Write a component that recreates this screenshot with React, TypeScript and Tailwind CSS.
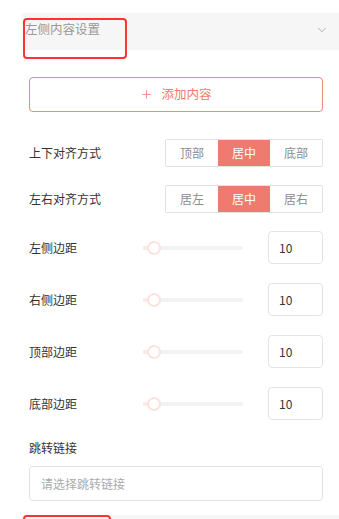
import { ChevronDown, Plus } from 'lucide-react'

const font = { fontFamily: '"Noto Sans CJK SC", "Noto Sans", sans-serif' }

function Segmented({ items, active }: { items: string[]; active: number }) {
  return (
    <div className="flex h-[28px] w-[158px] border border-[#e3e3e3] rounded-[2px] overflow-hidden">
      {items.map((t, i) => (
        <div
          key={t}
          className={
            'flex-1 flex items-center justify-center text-[12px] ' +
            (i === active ? 'bg-[#ee7a70] text-white' : 'bg-white text-[#8c8c8c]') +
            (i > 0 && i !== active && i - 1 !== active ? ' border-l border-[#e3e3e3]' : '')
          }
        >
          {t}
        </div>
      ))}
    </div>
  )
}

function SliderRow({ label }: { label: string }) {
  return (
    <div className="flex items-center h-[33px]">
      <span className="w-[114px] text-[12px] text-[#333]">{label}</span>
      <div className="relative w-[100px] h-[4px] rounded-full bg-[#f3f3f3]">
        <div className="absolute left-0 top-0 h-[4px] w-[10px] rounded-l-full bg-[#fdeae7]" />
        <div className="absolute left-[4px] top-[-5px] w-[14px] h-[14px] rounded-full bg-white border-2 border-[#fde3df]" />
      </div>
      <div className="ml-auto w-[55px] h-[33px] border border-[#e3e3e3] rounded-[4px] flex items-center pl-[10px] text-[12px] text-[#333]">
        10
      </div>
    </div>
  )
}

export default function App() {
  return (
    <div className="w-[339px] h-[519px] bg-white overflow-hidden" style={font}>
      {/* 标题栏 */}
      <div className="relative mt-[13px] ml-[22px] h-[37px] bg-[#f6f6f6] flex items-center justify-between pl-[3px] pr-[10px]">
        <span className="text-[12.5px] text-[#999] -mt-[4px]">左侧内容设置</span>
        <ChevronDown className="h-[14px] w-[14px] text-[#999] -mt-[3px]" strokeWidth={1.3} />
        <div className="absolute left-[1px] top-[5px] w-[104px] h-[41px] border-2 border-[#f33] rounded-[4px]" />
      </div>

      <div className="pl-[29px] pr-[16px]">
        <button className="mt-[27px] w-full h-[35px] border border-[#ee8a82] rounded-[4px] flex items-center justify-center gap-[8px] text-[12.5px] text-[#ee7a70]">
          <Plus className="h-[13px] w-[13px]" strokeWidth={1.5} />
          添加内容
        </button>

        <div className="mt-[27px] flex items-center justify-between">
          <span className="text-[12px] text-[#333]">上下对齐方式</span>
          <Segmented items={['顶部', '居中', '底部']} active={1} />
        </div>
        <div className="mt-[18px] flex items-center justify-between">
          <span className="text-[12px] text-[#333]">左右对齐方式</span>
          <Segmented items={['居左', '居中', '居右']} active={1} />
        </div>

        <div className="mt-[18px] flex flex-col gap-[19px]">
          <SliderRow label="左侧边距" />
          <SliderRow label="右侧边距" />
          <SliderRow label="顶部边距" />
          <SliderRow label="底部边距" />
        </div>

        <div className="mt-[19px] text-[12px] text-[#333] leading-[17px]">跳转链接</div>
        <div className="mt-[10px] h-[35px] border border-[#e3e3e3] rounded-[4px] flex items-center pl-[11px] text-[12px] text-[#aaa]">
          请选择跳转链接
        </div>
      </div>

      <div className="relative mt-[14px] ml-[22px] h-[20px] bg-[#f6f6f6]">
        <div className="absolute left-[1px] top-0 w-[88px] h-[30px] border-2 border-[#f33] rounded-[4px]" />
      </div>
    </div>
  )
}
